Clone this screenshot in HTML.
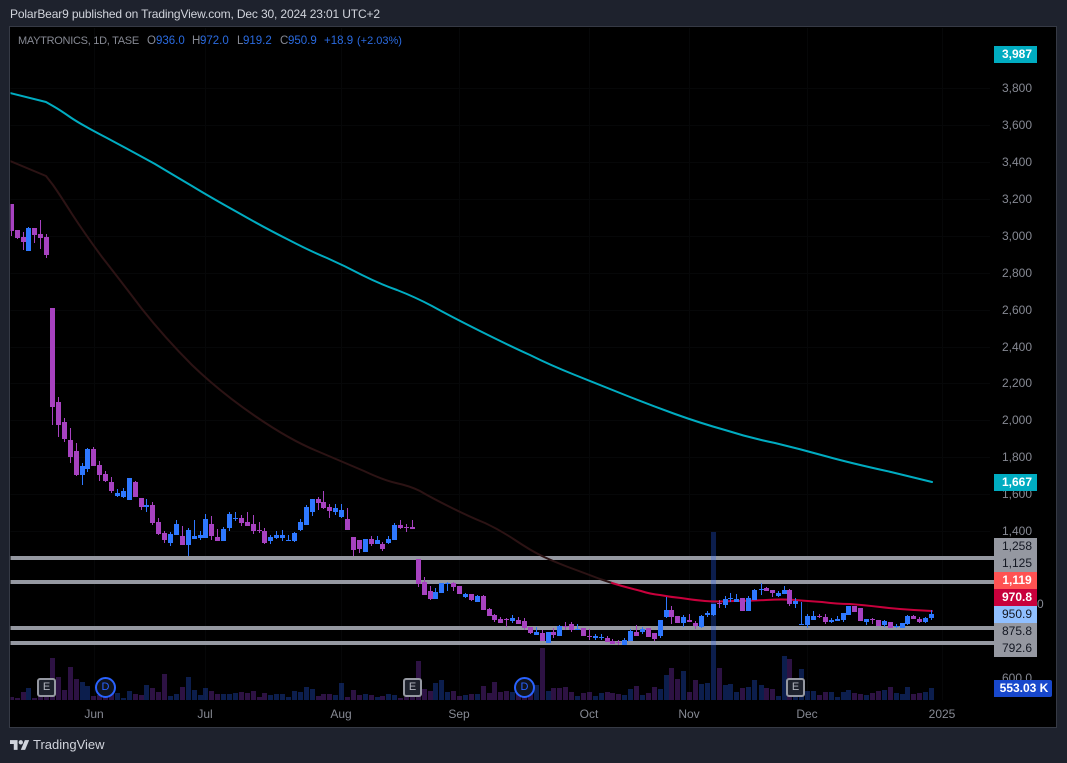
<!DOCTYPE html>
<html><head><meta charset="utf-8">
<style>
html,body{margin:0;padding:0;width:1067px;height:763px;overflow:hidden;background:#1e222d;font-family:"Liberation Sans",sans-serif}
.t{position:absolute;white-space:nowrap;line-height:14px}
svg{position:absolute;left:0;top:0}
#box{position:absolute;left:10px;top:27px;width:1046px;height:700px;background:#000;box-shadow:0 0 0 1px #363a45}
.a{color:#868993;font-size:12px;right:35px;text-align:right}
.x{color:#868993;font-size:12px;top:707px;transform:translateX(-50%)}
.p{position:absolute;left:994px;width:43px;height:17px;line-height:17px;font-size:12px;text-align:center;box-sizing:border-box;padding-left:3px}
.g{background:#9598a1;color:#131722}
.w{color:#fff;font-weight:bold}
.e{position:absolute;top:678px;width:19px;height:19px;box-sizing:border-box;border:2px solid #9598a1;border-radius:3px;background:#1e222d;color:#b2b5be;font-size:11px;line-height:15px;text-align:center}
.d{position:absolute;top:677px;width:21px;height:21px;box-sizing:border-box;border:2px solid #2962ff;border-radius:50%;background:#10131c;color:#2962ff;font-size:11px;line-height:17px;text-align:center}
.l{top:34px;font-size:11.5px;color:#868993}
.b{color:#2a6adf}
</style></head>
<body>
<div id="box"></div>
<svg width="1067" height="763" viewBox="0 0 1067 763">
<defs><clipPath id="c"><rect x="10.5" y="28" width="1045" height="699"/></clipPath></defs>
<g clip-path="url(#c)">
<g stroke="#060708" stroke-width="1" shape-rendering="crispEdges"><path d="M94.5 28V700M205.5 28V700M341.5 28V700M459.5 28V700M589.5 28V700M689.5 28V700M807.5 28V700M942.5 28V700M10 88.5H990M10 125.5H990M10 162.5H990M10 199.5H990M10 236.5H990M10 273.5H990M10 310.5H990M10 347.5H990M10 383.5H990M10 420.5H990M10 457.5H990M10 494.5H990M10 531.5H990"/></g>
<g fill="#9598a1" shape-rendering="crispEdges"><rect x="10" y="556" width="984" height="4"/><rect x="10" y="580" width="984" height="4"/><rect x="10" y="626" width="984" height="4"/><rect x="10" y="641" width="984" height="4"/></g>
<g fill="none" stroke-width="5" shape-rendering="crispEdges">
<path stroke="#a040f0" stroke-opacity=".28" d="M11.5 700v-3M17.5 700v-2M23.5 700v-8M34.5 700v-2M40.5 700v-7M46.5 700v-5M52.5 700v-42M58.5 700v-23M64.5 700v-10M70.5 700v-33M76.5 700v-21M93.5 700v-4M99.5 700v-5M105.5 700v-4M111.5 700v-6M135.5 700v-6M141.5 700v-5M152.5 700v-12M158.5 700v-8M164.5 700v-26M182.5 700v-13M211.5 700v-9M217.5 700v-6M241.5 700v-8M247.5 700v-7M253.5 700v-9M259.5 700v-3M264.5 700v-7M318.5 700v-4M323.5 700v-6M329.5 700v-6M347.5 700v-3M353.5 700v-10M359.5 700v-5M371.5 700v-5M382.5 700v-4M400.5 700v-2M406.5 700v-3M412.5 700v-5M418.5 700v-39M424.5 700v-11M430.5 700v-9M453.5 700v-9M459.5 700v-4M471.5 700v-6M483.5 700v-14M489.5 700v-7M494.5 700v-18M500.5 700v-8M506.5 700v-9M518.5 700v-7M524.5 700v-5M530.5 700v-6M542.5 700v-52M553.5 700v-12M559.5 700v-12M565.5 700v-13M571.5 700v-8M583.5 700v-7M589.5 700v-8M607.5 700v-8M612.5 700v-7M618.5 700v-6M636.5 700v-14M648.5 700v-7M654.5 700v-13M671.5 700v-32M677.5 700v-21M689.5 700v-8M695.5 700v-20M719.5 700v-32M742.5 700v-12M766.5 700v-12M772.5 700v-11M789.5 700v-41M819.5 700v-5M825.5 700v-8M854.5 700v-7M860.5 700v-6M872.5 700v-7M878.5 700v-9M890.5 700v-13M913.5 700v-6M919.5 700v-7"/>
<path stroke="#2962ff" stroke-opacity=".3" d="M28.5 700v-12M82.5 700v-18M87.5 700v-14M117.5 700v-7M123.5 700v-2M129.5 700v-9M146.5 700v-15M170.5 700v-4M176.5 700v-6M188.5 700v-23M194.5 700v-10M200.5 700v-5M205.5 700v-12M223.5 700v-6M229.5 700v-6M235.5 700v-7M270.5 700v-5M276.5 700v-6M282.5 700v-6M288.5 700v-3M294.5 700v-9M300.5 700v-8M306.5 700v-13M312.5 700v-11M335.5 700v-5M341.5 700v-17M365.5 700v-6M377.5 700v-3M388.5 700v-6M394.5 700v-5M435.5 700v-17M441.5 700v-20M447.5 700v-8M465.5 700v-5M477.5 700v-6M512.5 700v-8M536.5 700v-15M548.5 700v-9M577.5 700v-4M595.5 700v-4M601.5 700v-7M624.5 700v-5M630.5 700v-11M642.5 700v-5M660.5 700v-11M666.5 700v-25M683.5 700v-29M701.5 700v-16M707.5 700v-17M713.5 700V532M725.5 700v-15M730.5 700v-16M736.5 700v-8M748.5 700v-13M754.5 700v-20M761.5 700v-15M778.5 700v-4M784.5 700v-44M795.5 700v-5M801.5 700v-31M807.5 700v-9M813.5 700v-9M831.5 700v-8M837.5 700v-3M843.5 700v-8M848.5 700v-10M866.5 700v-5M884.5 700v-10M896.5 700v-7M902.5 700v-6M907.5 700v-13M925.5 700v-8M931.5 700v-12"/>
</g>
<g fill="none" stroke-linejoin="round" stroke-linecap="round">
<path stroke="#00acc1" stroke-width="2" d="M10 93L46 102L53 106Q60 110 70 117Q80 124 107 138Q135 153 155 164Q175 176 192 186Q210 197 237 212Q265 228 287 239Q310 251 327 258Q345 266 362 275Q380 284 397 290Q415 297 432 306Q450 316 480 331Q510 346 530 355Q550 365 575 375Q600 385 625 395Q650 405 675 414Q700 423 725 430Q750 438 775 443Q800 449 825 456Q850 463 891 472L932 482"/>
<path stroke="#2c1314" stroke-width="2" d="M10 161L46 176L53 185Q60 195 72 214Q85 234 102 257Q120 280 142 309Q165 338 192 365Q220 392 255 416Q290 440 317 451Q345 463 364 471Q383 480 396 483Q410 486 420 491Q430 497 450 507Q470 517 485 523Q500 530 515 540Q530 550 540 555Q550 560 568 567Q587 574 600 579L612 583"/>
<path stroke="#c8003c" stroke-width="2" d="M612 583L622 586Q633 589 641 591Q650 594 660 595Q670 597 681 598Q693 600 705 601Q717 602 733 601Q750 601 766 600Q783 599 795 600Q807 601 822 602Q837 604 850 604Q863 605 880 607Q897 609 914 610L932 611"/>
</g>
<g fill="none" shape-rendering="crispEdges">
<path stroke="#a742c0" stroke-width="1" d="M11.5 204V236M17.5 230V239M23.5 232V250M34.5 228V243M40.5 220V249M46.5 234V258M52.5 308V425M58.5 397V437M64.5 418V442M70.5 428V463M76.5 443V476M93.5 447V466M99.5 461V481M105.5 471V482M111.5 477V493M135.5 481V497M141.5 498V510M152.5 502V525M158.5 518V535M164.5 531V543M182.5 526V545M211.5 516V540M217.5 529V541M241.5 515V526M247.5 512V526M253.5 515V534M259.5 522V533M264.5 528V544M318.5 497V510M323.5 491V509M329.5 504V518M347.5 508V530M353.5 537V556M359.5 540V553M371.5 536V546M382.5 542V551M400.5 520V529M406.5 524V532M412.5 520V529M418.5 559V587M424.5 577V595M430.5 586V600M453.5 582V591M459.5 586V594M471.5 594V601M483.5 595V610M489.5 608V616M494.5 614V622M500.5 617V623M506.5 618V627M518.5 617V624M524.5 618V630M530.5 627V634M542.5 630V641M553.5 628V638M565.5 622V630M571.5 622V632M583.5 628V636M589.5 629V640M607.5 636V642M612.5 639V644M618.5 640V645M636.5 625V636M648.5 628V637M654.5 633V641M671.5 606V624M677.5 616V623M689.5 614V622M695.5 621V629M719.5 600V608M742.5 598V611M766.5 587V591M772.5 590V597M789.5 589V606M819.5 614V618M825.5 614V624M854.5 606V612M860.5 608V621M872.5 618V624M878.5 620V626M890.5 622V628M913.5 615V619M919.5 617V623"/>
<path stroke="#a742c0" stroke-width="5" d="M11.5 204V231M17.5 230V238M23.5 237V242M34.5 228V235M40.5 234V238M46.5 237V255M52.5 308V407M58.5 402V425M64.5 422V439M70.5 440V457M76.5 451V475M93.5 449V466M99.5 465V475M105.5 474V481M111.5 482V491M135.5 482V497M141.5 498V507M152.5 505V523M158.5 522V534M164.5 533V540M182.5 536V545M211.5 524V536M217.5 537V541M241.5 518V523M247.5 522V526M253.5 524V531M259.5 530V531M264.5 531V543M318.5 499V503M323.5 502V508M329.5 507V511M347.5 519V530M353.5 537V550M359.5 540V549M371.5 539V544M382.5 544V549M400.5 525V528M406.5 527V528M412.5 527V529M418.5 559V584M424.5 582V595M430.5 591V599M453.5 583V587M459.5 586V594M471.5 594V600M483.5 596V610M489.5 609V616M494.5 615V620M500.5 619V623M506.5 619V620M518.5 620V624M524.5 621V628M530.5 627V633M542.5 633V641M553.5 632V635M565.5 626V627M571.5 624V630M583.5 628V636M589.5 636V637M607.5 638V642M612.5 641V644M618.5 642V643M636.5 632V636M648.5 628V637M654.5 633V639M671.5 610V617M677.5 616V623M689.5 620V622M695.5 623V626M719.5 603V604M742.5 598V611M766.5 588V591M772.5 590V593M789.5 590V604M819.5 616V617M825.5 617V622M854.5 606V612M860.5 608V621M872.5 619V620M878.5 620V626M890.5 622V628M913.5 616V619M919.5 619V622"/>
<path stroke="#2e78ff" stroke-width="1" d="M28.5 227V251M82.5 463V485M87.5 448V472M117.5 489V497M123.5 488V498M129.5 478V500M146.5 499V512M170.5 532V546M176.5 520V535M188.5 528V556M194.5 520V539M200.5 531V540M205.5 514V538M223.5 527V541M229.5 512V531M235.5 512V521M270.5 535V544M276.5 531V539M282.5 530V541M288.5 535V541M294.5 532V542M300.5 519V531M306.5 505V525M312.5 499V516M335.5 504V515M341.5 504V518M365.5 539V552M377.5 536V544M388.5 536V544M394.5 523V540M435.5 588V599M441.5 583V593M447.5 582V591M465.5 593V598M477.5 595V602M512.5 615V623M536.5 627V635M548.5 632V643M559.5 625V636M577.5 624V630M595.5 634V640M601.5 634V640M624.5 638V645M630.5 629V641M642.5 627V634M660.5 620V638M666.5 597V618M683.5 615V627M701.5 615V628M707.5 611V617M713.5 604V616M725.5 596V608M730.5 593V602M736.5 594V602M748.5 596V611M754.5 589V600M761.5 583V595M778.5 591V597M784.5 586V594M795.5 598V608M801.5 602V625M807.5 614V628M813.5 611V620M831.5 618V623M837.5 616V621M843.5 613V622M848.5 606V615M866.5 619V625M884.5 620V627M896.5 624V628M902.5 623V628M907.5 615V625M925.5 617V623M931.5 610V620"/>
<path stroke="#2e78ff" stroke-width="5" d="M28.5 228V251M82.5 466V475M87.5 449V469M117.5 493V496M123.5 491V497M129.5 478V500M146.5 505V507M170.5 534V543M176.5 524V535M188.5 530V545M194.5 536V539M200.5 535V538M205.5 519V538M223.5 529V541M229.5 514V528M235.5 518V519M270.5 537V541M276.5 535V538M282.5 535V538M288.5 540V541M294.5 533V541M300.5 522V530M306.5 507V525M312.5 499V512M335.5 508V512M341.5 510V517M365.5 539V552M377.5 540V544M388.5 539V543M394.5 525V540M435.5 592V599M441.5 583V593M447.5 583V584M465.5 594V597M477.5 596V602M512.5 618V621M536.5 632V635M548.5 632V643M559.5 626V636M577.5 629V630M595.5 636V638M601.5 637V638M624.5 640V645M630.5 631V641M642.5 629V632M660.5 620V636M666.5 610V617M683.5 617V623M701.5 616V627M707.5 613V615M713.5 604V615M725.5 599V605M730.5 598V599M736.5 599V602M748.5 598V611M754.5 590V600M761.5 589V590M778.5 593V596M784.5 590V594M795.5 601V604M801.5 624V625M807.5 616V625M813.5 616V620M831.5 620V622M837.5 619V621M843.5 613V620M848.5 606V615M866.5 619V622M884.5 621V625M896.5 626V627M902.5 623V628M907.5 616V624M925.5 618V622M931.5 614V618"/>
</g>
</g>
<g fill="#d1d4dc" transform="translate(10 738) scale(.54)"><path d="M14 22H7V11H0V4h14v18z"/><circle cx="20" cy="8" r="4"/><path d="M28 22h-8l7.5-18h8L28 22z"/></g>
</svg>

<div class="t" style="left:10px;top:7px;font-size:12px;color:#d1d4dc;letter-spacing:-.14px">PolarBear9 published on TradingView.com, Dec 30, 2024 23:01 UTC+2</div>
<div class="t l" style="left:18px;font-size:11px;letter-spacing:-.28px">MAYTRONICS, 1D, TASE</div>
<div class="t l" style="left:147px">O</div><div class="t l b" style="left:156px">936.0</div>
<div class="t l" style="left:192px">H</div><div class="t l b" style="left:200px">972.0</div>
<div class="t l" style="left:237px">L</div><div class="t l b" style="left:243px">919.2</div>
<div class="t l" style="left:280px">C</div><div class="t l b" style="left:288px">950.9</div>
<div class="t l b" style="left:324px">+18.9</div>
<div class="t l b" style="left:357px;font-size:11px">(+2.03%)</div>

<div class="t a" style="top:81px">3,800</div>
<div class="t a" style="top:118px">3,600</div>
<div class="t a" style="top:155px">3,400</div>
<div class="t a" style="top:192px">3,200</div>
<div class="t a" style="top:229px">3,000</div>
<div class="t a" style="top:266px">2,800</div>
<div class="t a" style="top:303px">2,600</div>
<div class="t a" style="top:340px">2,400</div>
<div class="t a" style="top:376px">2,200</div>
<div class="t a" style="top:413px">2,000</div>
<div class="t a" style="top:450px">1,800</div>
<div class="t a" style="top:487px">1,600</div>
<div class="t a" style="top:524px">1,400</div>
<div class="t a" style="top:671px">600.0</div>
<div class="t" style="left:1037px;top:597px;font-size:12px;color:#868993">0</div>

<div class="p w" style="top:46px;background:#00acc1">3,987</div>
<div class="p w" style="top:474px;background:#00acc1">1,667</div>
<div class="p g" style="top:538px">1,258</div>
<div class="p g" style="top:555px">1,125</div>
<div class="p w" style="top:572px;background:#ff5252">1,119</div>
<div class="p w" style="top:589px;background:#c8003c">970.8</div>
<div class="p" style="top:606px;background:#90bfff;color:#131722">950.9</div>
<div class="p g" style="top:623px">875.8</div>
<div class="p g" style="top:640px">792.6</div>
<div class="p w" style="top:680px;width:58px;background:#1848cc;border-radius:0 2px 2px 0;padding:0;padding-left:2px">553.03 K</div>

<div class="t x" style="left:94px">Jun</div>
<div class="t x" style="left:205px">Jul</div>
<div class="t x" style="left:341px">Aug</div>
<div class="t x" style="left:459px">Sep</div>
<div class="t x" style="left:589px">Oct</div>
<div class="t x" style="left:689px">Nov</div>
<div class="t x" style="left:807px">Dec</div>
<div class="t x" style="left:942px">2025</div>

<div class="e" style="left:37px">E</div>
<div class="e" style="left:403px">E</div>
<div class="e" style="left:786px">E</div>
<div class="d" style="left:95px">D</div>
<div class="d" style="left:514px">D</div>

<div class="t" style="left:33px;top:738px;font-size:13px;color:#d1d4dc">TradingView</div>
</body></html>
